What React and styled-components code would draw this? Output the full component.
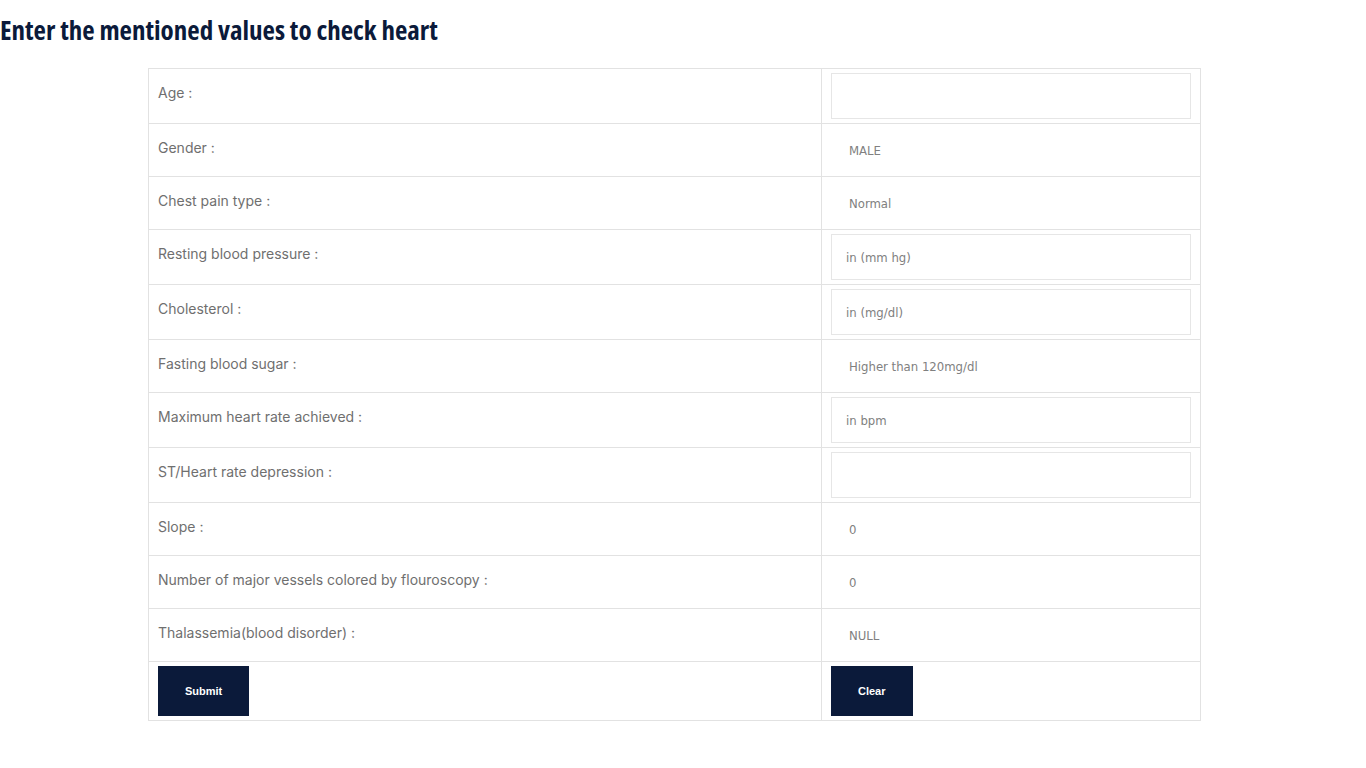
import React, { useState } from 'react';
import styled, { createGlobalStyle } from 'styled-components';

const GlobalStyle = createGlobalStyle`
  body {
    margin: 0;
    background: #fff;
    font-family: Inter, "Liberation Sans", sans-serif;
  }
  * {
    box-sizing: border-box;
  }
`;

// the reference keeps a 17px scrollbar gutter on the right
const Page = styled.div`
  padding: 13px 17px 40px 0;
`;

const Heading = styled.h2`
  margin: 0 0 21px;
  font-family: "Open Sans", "DejaVu Sans", sans-serif;
  font-stretch: 75%;
  font-size: 27px;
  font-weight: 700;
  line-height: 34px;
  color: #0b1a3a;
`;

const FormTable = styled.table`
  width: 1053px;
  margin: 0 auto;
  border-collapse: collapse;
  border: 1px solid #e2e2e2;
`;

const Cell = styled.td`
  border: 1px solid #e2e2e2;
  padding: 4px 9px;
  vertical-align: top;
  width: ${(p) => p.$width || 'auto'};
`;

const Label = styled.label`
  display: block;
  margin: 8px 0 12px;
  font-size: 14px;
  line-height: 24px;
  color: #6f6f6f;
`;

const TextInput = styled.input`
  display: block;
  width: 100%;
  height: 46px;
  border: 1px solid #e6e6e6;
  padding: 0 14px;
  font-family: "DejaVu Sans Condensed", "DejaVu Sans", sans-serif;
  font-size: 13px;
  color: #555;
  outline: none;

  &::placeholder {
    color: #808080;
  }
`;

const Select = styled.select`
  display: block;
  width: 100%;
  height: 44px;
  border: none;
  background: #fff;
  padding: 0 18px;
  font-family: "DejaVu Sans Condensed", "DejaVu Sans", sans-serif;
  font-size: 13px;
  color: #808080;
  outline: none;
  appearance: none;
`;

const Button = styled.button`
  display: block;
  height: 50px;
  padding: 0 27px;
  border: none;
  background: #0b1a3a;
  color: #fff;
  font-family: "Liberation Sans", Arial, sans-serif;
  font-size: 11px;
  font-weight: 700;
  cursor: pointer;
`;

const fields = [
  { label: 'Age :', type: 'input', placeholder: '' },
  { label: 'Gender :', type: 'select', options: ['MALE', 'FEMALE'] },
  { label: 'Chest pain type :', type: 'select', options: ['Normal', 'Typical angina', 'Atypical angina', 'Non-anginal pain', 'Asymptomatic'] },
  { label: 'Resting blood pressure :', type: 'input', placeholder: 'in (mm hg)' },
  { label: 'Cholesterol :', type: 'input', placeholder: 'in (mg/dl)' },
  { label: 'Fasting blood sugar :', type: 'select', options: ['Higher than 120mg/dl', 'Lower than 120mg/dl'] },
  { label: 'Maximum heart rate achieved :', type: 'input', placeholder: 'in bpm' },
  { label: 'ST/Heart rate depression :', type: 'input', placeholder: '' },
  { label: 'Slope :', type: 'select', options: ['0', '1', '2'] },
  { label: 'Number of major vessels colored by flouroscopy :', type: 'select', options: ['0', '1', '2', '3'] },
  { label: 'Thalassemia(blood disorder) :', type: 'select', options: ['NULL', 'Normal', 'Fixed defect', 'Reversable defect'] },
];

export default function App() {
  const [values, setValues] = useState({});

  const handleChange = (key) => (e) => {
    setValues({ ...values, [key]: e.target.value });
  };

  const handleClear = () => {
    setValues({});
  };

  return (
    <>
      <GlobalStyle />
      <Page>
        <Heading>Enter the mentioned values to check heart</Heading>
        <form onSubmit={(e) => e.preventDefault()}>
          <FormTable>
            <tbody>
              {fields.map((f) => (
                <tr key={f.label}>
                  <Cell $width="673px">
                    <Label>{f.label}</Label>
                  </Cell>
                  <Cell>
                    {f.type === 'input' ? (
                      <TextInput
                        placeholder={f.placeholder}
                        value={values[f.label] || ''}
                        onChange={handleChange(f.label)}
                      />
                    ) : (
                      <Select value={values[f.label] || f.options[0]} onChange={handleChange(f.label)}>
                        {f.options.map((o) => (
                          <option key={o}>{o}</option>
                        ))}
                      </Select>
                    )}
                  </Cell>
                </tr>
              ))}
              <tr>
                <Cell>
                  <Button type="submit">Submit</Button>
                </Cell>
                <Cell>
                  <Button type="button" onClick={handleClear}>Clear</Button>
                </Cell>
              </tr>
            </tbody>
          </FormTable>
        </form>
      </Page>
    </>
  );
}
